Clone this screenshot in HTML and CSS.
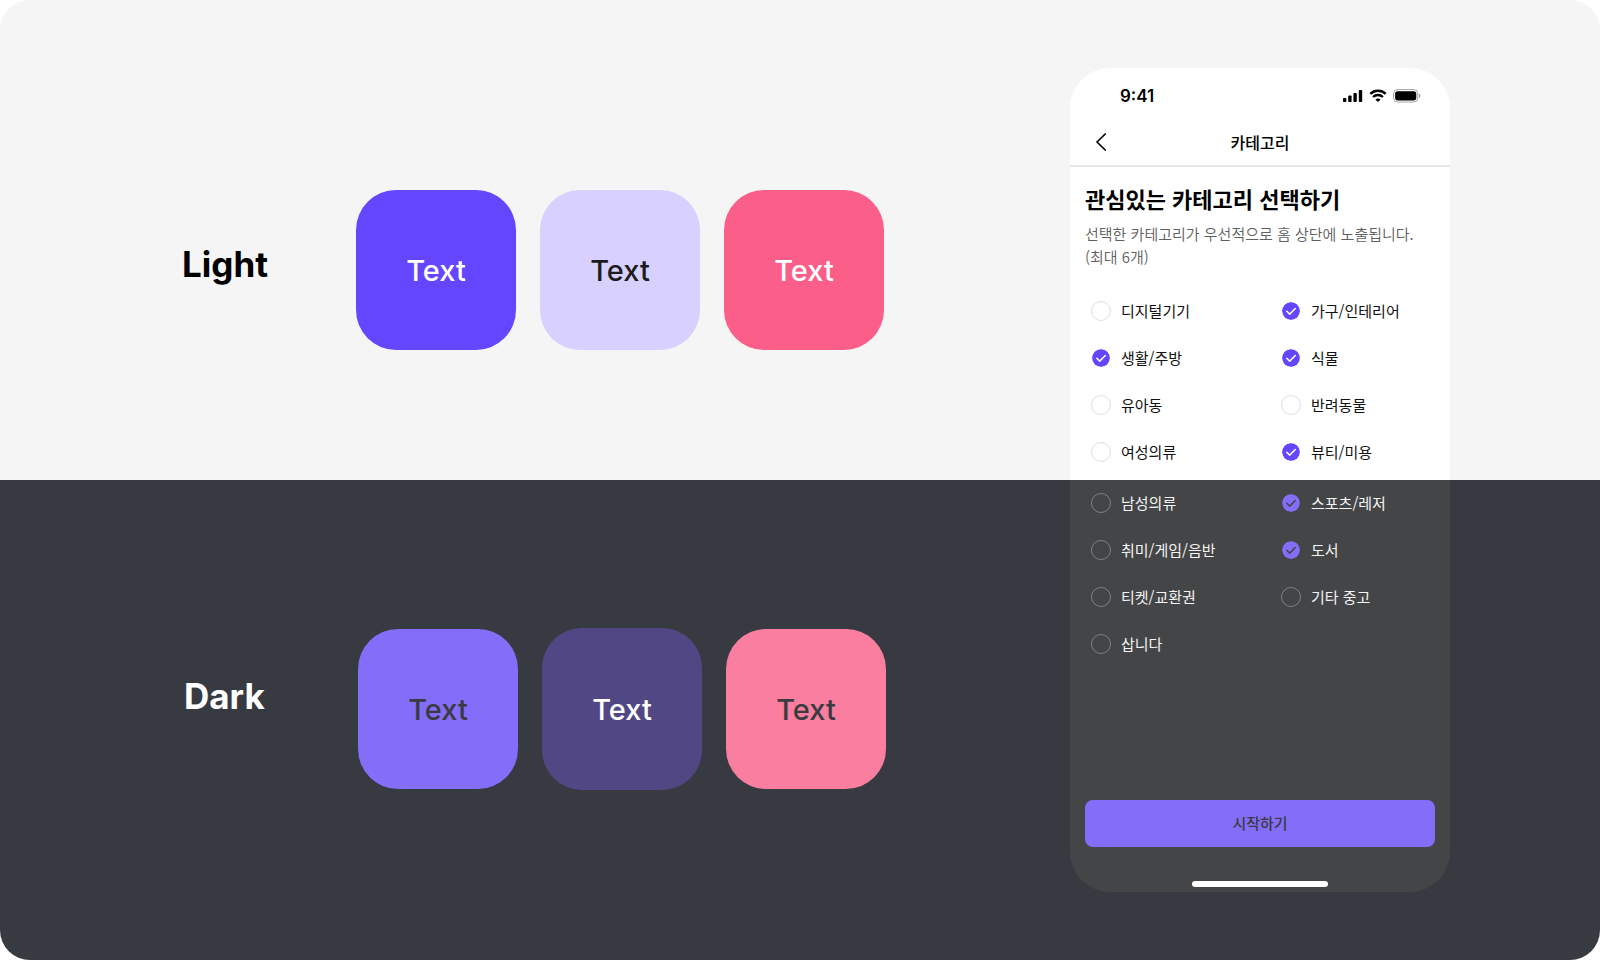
FILE: index.html
```
<!DOCTYPE html>
<html lang="ko">
<head>
    <meta charset="UTF-8">
    <meta name="viewport" content="width=device-width, initial-scale=1.0">
    <title>Light / Dark Theme</title>
    <link rel="stylesheet" href="styles.css">
</head>
<body>
    <svg class="symbols" aria-hidden="true">
        <symbol id="check" viewBox="0 0 20 20">
            <path d="M5.8 10.3l2.9 2.8 5.6-5.6" fill="none" stroke="currentColor" stroke-width="1.5" stroke-linecap="round" stroke-linejoin="round"/>
        </symbol>
    </svg>

    <main class="board">
        <section class="theme light">
            <h2 class="theme-name">Light</h2>
            <div class="swatches">
                <div class="swatch primary">Text</div>
                <div class="swatch secondary">Text</div>
                <div class="swatch accent">Text</div>
            </div>

            <div class="phone phone-top">
                <div class="status-bar">
                    <span class="time">9:41</span>
                    <div class="status-icons">
                        <svg width="20" height="14" viewBox="0 0 20 14" aria-hidden="true">
                            <rect x="0" y="9" width="3.4" height="4" rx="1"/>
                            <rect x="5.2" y="6.6" width="3.4" height="6.4" rx="1"/>
                            <rect x="10.4" y="4" width="3.4" height="9" rx="1"/>
                            <rect x="15.8" y="1" width="3.4" height="12" rx="1"/>
                        </svg>
                        <svg width="18" height="14" viewBox="0 0 18 14" aria-hidden="true">
                            <path d="M1.3 4.900a11 11 0 0 1 15.400 0" fill="none" stroke="#000" stroke-width="2.400"/>
                            <path d="M4.100 8a7 7 0 0 1 9.800 0" fill="none" stroke="#000" stroke-width="2.400"/>
                            <path d="M6.400 10.500a4 4 0 0 1 5.200 0L9 13z"/>
                        </svg>
                        <svg width="28" height="14" viewBox="0 0 28 14" aria-hidden="true">
                            <rect x=".5" y=".6" width="24.4" height="12.4" rx="4" fill="none" stroke="#000" stroke-opacity=".35"/>
                            <rect x="2.1" y="2.2" width="21.2" height="9.2" rx="2.6"/>
                            <path d="M26 4.7v4.2c.8-.4 1.4-1.2 1.4-2.1s-.6-1.7-1.4-2.1z" fill-opacity=".4"/>
                        </svg>
                    </div>
                </div>

                <header class="nav-bar">
                    <button type="button" class="back" aria-label="뒤로">
                        <svg width="12" height="18" viewBox="0 0 12 18" aria-hidden="true">
                            <path d="M10.200 1L2 9l8.200 8" fill="none" stroke="#000" stroke-width="1.700" stroke-linecap="round" stroke-linejoin="round"/>
                        </svg>
                    </button>
                    <h1>카테고리</h1>
                </header>

                <div class="intro">
                    <h2>관심있는 카테고리 선택하기</h2>
                    <p>선택한 카테고리가 우선적으로 홈 상단에 노출됩니다.<br>(최대 6개)</p>
                </div>

                <div class="categories">
                    <label class="category"><input type="checkbox"><svg class="mark"><use href="#check"/></svg>디지털기기</label>
                    <label class="category"><input type="checkbox" checked><svg class="mark"><use href="#check"/></svg>가구/인테리어</label>
                    <label class="category"><input type="checkbox" checked><svg class="mark"><use href="#check"/></svg>생활/주방</label>
                    <label class="category"><input type="checkbox" checked><svg class="mark"><use href="#check"/></svg>식물</label>
                    <label class="category"><input type="checkbox"><svg class="mark"><use href="#check"/></svg>유아동</label>
                    <label class="category"><input type="checkbox"><svg class="mark"><use href="#check"/></svg>반려동물</label>
                    <label class="category"><input type="checkbox"><svg class="mark"><use href="#check"/></svg>여성의류</label>
                    <label class="category"><input type="checkbox" checked><svg class="mark"><use href="#check"/></svg>뷰티/미용</label>
                </div>
            </div>
        </section>

        <section class="theme dark">
            <h2 class="theme-name">Dark</h2>
            <div class="swatches">
                <div class="swatch primary">Text</div>
                <div class="swatch secondary">Text</div>
                <div class="swatch accent">Text</div>
            </div>

            <div class="phone phone-bottom">
                <div class="categories">
                    <label class="category"><input type="checkbox"><svg class="mark"><use href="#check"/></svg>남성의류</label>
                    <label class="category"><input type="checkbox" checked><svg class="mark"><use href="#check"/></svg>스포츠/레저</label>
                    <label class="category"><input type="checkbox"><svg class="mark"><use href="#check"/></svg>취미/게임/음반</label>
                    <label class="category"><input type="checkbox" checked><svg class="mark"><use href="#check"/></svg>도서</label>
                    <label class="category"><input type="checkbox"><svg class="mark"><use href="#check"/></svg>티켓/교환권</label>
                    <label class="category"><input type="checkbox"><svg class="mark"><use href="#check"/></svg>기타 중고</label>
                    <label class="category"><input type="checkbox"><svg class="mark"><use href="#check"/></svg>삽니다</label>
                </div>
                <button type="button" class="start">시작하기</button>
                <div class="home-indicator"></div>
            </div>
        </section>
    </main>
</body>
</html>
```
FILE: styles.css
```
* {
    box-sizing: border-box;
}
body {
    margin: 0;
    background-color: #fff;
    font-family: Inter, "Noto Sans CJK KR", sans-serif;
}
h1, h2, p {
    margin: 0;
}
.symbols {
    display: none;
}
.board {
    border-radius: 30px;
    overflow: hidden;
}

/* Themes */
.theme {
    display: flex;
    align-items: flex-start;
    min-height: 50vh;
    padding-right: 150px;
}
.light {
    --primary: #6446ff;
    --secondary: #d8d0ff;
    --accent: #fb5f89;
    --on-primary: #fff;
    --on-secondary: #1c1c1c;
    --surface: #fff;
    --text: #111;
    --ring: #dedee6;
    background-color: #f5f5f5;
    color: #000;
    padding-left: 182px;
}
.dark {
    --primary: #846df9;
    --secondary: #524785;
    --accent: #f97e9f;
    --on-primary: #3a3b40;
    --on-secondary: #fff;
    --surface: #444546;
    --text: #f4f4f4;
    --ring: #808183;
    background-color: #383a42;
    color: #fff;
    padding-left: 184px;
}
.theme-name {
    width: 174px;
    font-size: 35px;
    line-height: 44px;
    font-weight: 700;
}
.light .theme-name {
    margin-top: 242px;
}
.dark .theme-name {
    margin-top: 194px;
}
.swatches {
    display: flex;
    align-items: center;
    gap: 24px;
}
.light .swatches {
    margin-top: 190px;
}
.dark .swatches {
    margin-top: 148px;
}
.swatch {
    display: flex;
    align-items: center;
    justify-content: center;
    width: 160px;
    height: 160px;
    border-radius: 40px;
    font-size: 29px;
    font-weight: 500;
}
.primary {
    background-color: var(--primary);
    color: var(--on-primary);
}
.secondary {
    background-color: var(--secondary);
    color: var(--on-secondary);
}
.accent {
    background-color: var(--accent);
    color: var(--on-primary);
}
.dark .secondary {
    height: 162px;
}

/* Phone */
.phone {
    width: 380px;
    margin-left: auto;
    background-color: var(--surface);
    color: var(--text);
    font-family: "Noto Sans CJK KR", sans-serif;
}
.phone-top {
    margin-top: 68px;
    padding-bottom: 4px;
    border-radius: 40px 40px 0 0;
}
.phone-bottom {
    padding-bottom: 5px;
    border-radius: 0 0 40px 40px;
}
.status-bar {
    display: flex;
    align-items: center;
    justify-content: space-between;
    height: 54px;
    padding: 1px 29px 0 50px;
}
.time {
    color: #000;
    font-family: Inter, sans-serif;
    font-size: 17px;
    font-weight: 600;
}
.status-icons {
    display: flex;
    align-items: center;
    gap: 6px;
}
.nav-bar {
    display: grid;
    grid-template-columns: 40px 1fr 40px;
    align-items: center;
    height: 45px;
    padding: 0 11px 3px;
    border-bottom: 2px solid #e6e6e8;
}
.nav-bar h1 {
    color: #000;
    font-size: 16px;
    line-height: 24px;
    font-weight: 500;
    text-align: center;
}
.back {
    display: flex;
    justify-content: center;
    padding: 0;
    border: none;
    background: none;
    cursor: pointer;
}
.intro {
    padding: 16px 15px 20px;
}
.intro h2 {
    color: #000;
    font-size: 22px;
    line-height: 30px;
    font-weight: 700;
}
.intro p {
    margin-top: 9px;
    color: #606060;
    font-size: 15px;
    line-height: 23px;
    font-weight: 350;
    white-space: nowrap;
}
.categories {
    display: grid;
    grid-template-columns: 1fr 1fr;
}
.category {
    display: grid;
    grid-template-columns: 20px 1fr;
    align-items: center;
    column-gap: 10px;
    height: 47px;
    padding: 0 0 2px 21px;
    font-size: 15px;
    font-weight: 400;
    cursor: pointer;
}
.category input {
    grid-area: 1 / 1;
    appearance: none;
    width: 20px;
    height: 20px;
    margin: 0;
    border: 1px solid var(--ring);
    border-radius: 50%;
}
.category input:checked {
    border-color: var(--surface);
    background-color: var(--primary);
    background-clip: padding-box;
}
.mark {
    grid-area: 1 / 1;
    width: 20px;
    height: 20px;
    color: var(--surface);
    visibility: hidden;
    pointer-events: none;
}
input:checked + .mark {
    visibility: visible;
}
.start {
    display: block;
    width: calc(100% - 30px);
    height: 47px;
    margin: 132px auto 34px;
    padding: 0 0 2px;
    border: none;
    border-radius: 8px;
    background-color: var(--primary);
    color: var(--on-primary);
    font-family: inherit;
    font-size: 15px;
    font-weight: 500;
    cursor: pointer;
}
.home-indicator {
    width: 136px;
    height: 6px;
    margin: 0 auto;
    border-radius: 3px;
    background-color: #fff;
}
```
